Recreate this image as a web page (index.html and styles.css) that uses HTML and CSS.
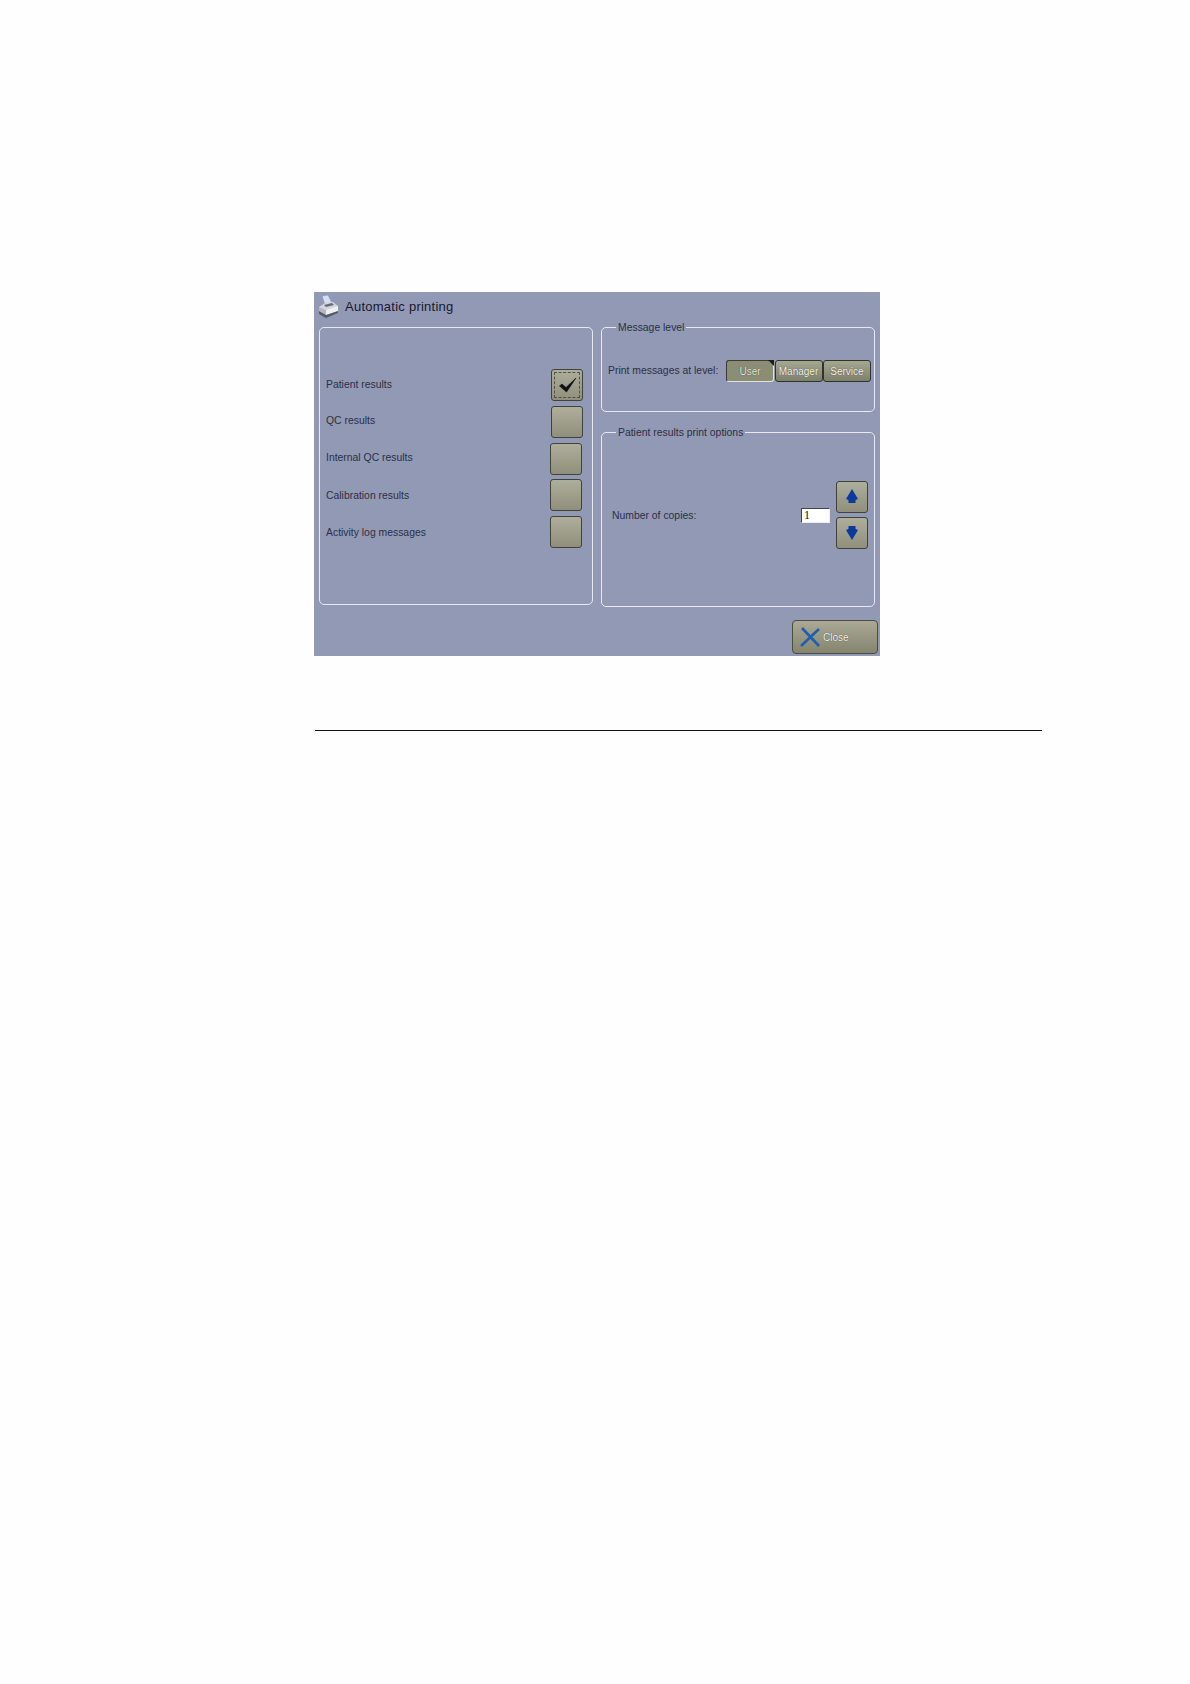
FILE: index.html
```html
<!DOCTYPE html>
<html lang="en">
<head>
    <meta charset="UTF-8">
    <title>Automatic printing</title>
    <link rel="stylesheet" href="styles.css">
</head>
<body>
    <div class="panel">
        <div class="title-row">
            <svg class="printer" width="21" height="23" viewBox="0 0 21 23">
                <path d="M4 1 L10 0 L14 8 L7 10 Z" fill="#d5def2" stroke="#8d96b4" stroke-width="0.7"/>
                <path d="M1 12 L7 8 L15 7 L20 11 L20 16 L8 20 L1 16 Z" fill="#d3d5da"/>
                <path d="M1 12 L8 15 L20 11 L20 16 L8 20 L1 16 Z" fill="#eff0f2"/>
                <path d="M8 15 L8 20 L1 16 L1 12 Z" fill="#b4b7c0"/>
                <path d="M1 16 L8 20 L20 16 L20 18 L8 23 L1 19 Z" fill="#565b69"/>
                <path d="M6 10 L14 8 L16 10 L8 12 Z" fill="#666b7b"/>
            </svg>
            <span class="title">Automatic printing</span>
        </div>
        <div class="columns">
            <div class="box check-box">
                <div class="check-row">
                    <span class="label-up">Patient results</span>
                    <button class="toggle toggle-focus">
                        <svg width="20" height="18" viewBox="0 0 20 18"><path d="M2.5 10 L5 8 L9 11.5 L19 2 L9.5 16 Z" fill="#111" stroke="#111" stroke-width="0.6" stroke-linejoin="round"/></svg>
                    </button>
                </div>
                <div class="check-row">
                    <span class="label-up">QC results</span>
                    <button class="toggle"></button>
                </div>
                <div class="check-row check-row-left">
                    <span class="label-up">Internal QC results</span>
                    <button class="toggle"></button>
                </div>
                <div class="check-row check-row-left">
                    <span>Calibration results</span>
                    <button class="toggle"></button>
                </div>
                <div class="check-row check-row-left">
                    <span>Activity log messages</span>
                    <button class="toggle"></button>
                </div>
            </div>
            <div class="right-col">
                <fieldset class="box level-box">
                    <legend>Message level</legend>
                    <span class="level-label">Print messages at level:</span>
                    <div class="level-btns">
                        <button class="level level-on">User</button>
                        <button class="level">Manager</button>
                        <button class="level">Service</button>
                    </div>
                </fieldset>
                <fieldset class="box copies-box">
                    <legend>Patient results print options</legend>
                    <div class="copies-row">
                        <span class="copies-label">Number of copies:</span>
                        <input class="copies-input" type="text" value="1">
                        <div class="spin">
                            <button class="toggle">
                                <svg width="16" height="18" viewBox="0 0 16 18"><path d="M8 1 L14 11 L11.5 12 L11.5 15 L4.5 15 L4.5 12 L2 11 Z" fill="#0b3a9c"/></svg>
                            </button>
                            <button class="toggle">
                                <svg width="16" height="18" viewBox="0 0 16 18"><path d="M4.5 2 L11.5 2 L11.5 5 L14 6 L8 16 L2 6 L4.5 5 Z" fill="#0b3a9c"/></svg>
                            </button>
                        </div>
                    </div>
                </fieldset>
            </div>
        </div>
        <div class="footer-row">
            <button class="close-btn">
                <svg width="22" height="22" viewBox="0 0 22 22"><path d="M3 2 L20 20 M20 3 L2 20" stroke="#1f5fb0" stroke-width="2.6" fill="none"/></svg>
                <span>Close</span>
            </button>
        </div>
    </div>
    <hr class="rule">
</body>
</html>
```

FILE: styles.css
```css
body { margin: 0; padding: 292px 0 0 314px; background: #fefefe; font-family: "Liberation Sans", sans-serif; font-size: 10.4px; color: #2b3044; }
button { padding: 0; font-family: inherit; cursor: pointer; }

.panel { width: 566px; height: 364px; background: #9299b5; }
.title-row { display: flex; align-items: center; box-sizing: border-box; height: 35px; padding: 0 0 7px 4px; }
.printer { margin-right: 6px; }
.title { font-size: 13px; letter-spacing: 0.25px; color: #161a2a; }

.columns { display: flex; gap: 8px; padding-left: 5px; }
.box { box-sizing: border-box; width: 274px; margin: 0; border: 1px solid #e6e9f0; border-radius: 5px; }
.box legend { padding: 0 2px; line-height: 1px; }

.check-box { display: flex; flex-direction: column; gap: 4.75px; height: 278px; padding: 41px 9px 0 6px; }
.check-row { display: flex; align-items: center; justify-content: space-between; }
.check-row-left { padding-right: 1px; }
.label-up { padding-bottom: 2px; }

.toggle { display: flex; align-items: center; justify-content: center; box-sizing: border-box; width: 32px; height: 32px; border: 1px solid #3f4436; border-radius: 3px; background: linear-gradient(#aeae9c, #8f8f7c); }
.toggle-focus { outline: 1px dashed #50534a; outline-offset: -4px; }

.right-col { display: flex; flex-direction: column; gap: 20px; }
.level-box { display: flex; align-items: flex-start; height: 85px; padding: 32px 3px 0 6px; }
.level-box legend { margin-left: 8px; }
.level-label { flex: 1; line-height: 22px; white-space: nowrap; }
.level-btns { display: flex; gap: 0.5px; }
.level { box-sizing: border-box; width: 48px; height: 22px; border: 1px solid #2f3428; border-radius: 3px; background: linear-gradient(#a5a890, #7d806b); color: #f4f4ea; font-size: 10px; text-shadow: 0 0 1px #333; }
.level-on { position: relative; background: #8b8e74; border-color: #3a3d30 #e2e4d6 #e2e4d6 #3a3d30; color: #e4e4d4; }
.level-on::after { content: ""; position: absolute; top: -1px; right: -1px; border-style: solid; border-width: 0 6px 6px 0; border-color: transparent #1c1f18 transparent transparent; }

.copies-box { height: 175px; padding: 48px 6px 0 10px; }
.copies-box legend { margin-left: 4px; }
.copies-row { display: flex; align-items: center; }
.copies-label { flex: 1; }
.copies-input { box-sizing: border-box; width: 29px; height: 15px; margin-right: 6px; padding: 0 0 0 2px; border: 1px solid #444; border-right-color: #eee; border-bottom-color: #eee; background: #fff; font-family: "Liberation Serif", serif; font-size: 12px; color: #111; }
.spin { display: flex; flex-direction: column; gap: 4px; }

.footer-row { display: flex; justify-content: flex-end; padding: 13px 2px 0 0; }
.close-btn { display: flex; align-items: center; gap: 2px; box-sizing: border-box; width: 86px; height: 34px; padding-left: 6px; border: 1px solid #4a4e40; border-radius: 4px; background: linear-gradient(#a9a995, #84846f); color: #f4f4ea; font-size: 10px; text-shadow: 0 0 1px #333; }

.rule { width: 727px; height: 1px; margin: 74px 0 0 1px; border: 0; background: #111; }
```
